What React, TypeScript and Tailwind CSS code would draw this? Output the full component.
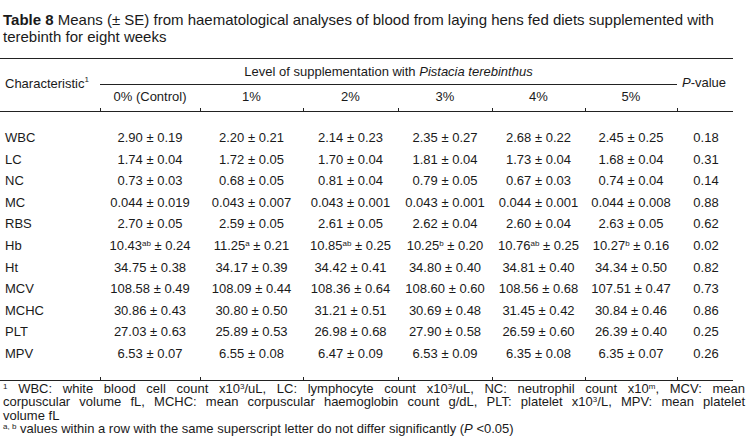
import * as React from "react"

const narrow = { fontFamily: '"Liberation Sans Narrow", "Liberation Sans", Arial, sans-serif' }

const cols = "grid grid-cols-[100px_100px_103px_95px_94px_93px_92px_56px]"

type Row = { name: string; vals: React.ReactNode[]; p: string }

const v = (a: string, b: string, sup?: string) => (
  <>
    {a}
    {sup ? <sup className="text-[8px] relative -top-[4px]">{sup}</sup> : null} ± {b}
  </>
)

const rows: Row[] = [
  { name: "WBC", vals: [v("2.90", "0.19"), v("2.20", "0.21"), v("2.14", "0.23"), v("2.35", "0.27"), v("2.68", "0.22"), v("2.45", "0.25")], p: "0.18" },
  { name: "LC", vals: [v("1.74", "0.04"), v("1.72", "0.05"), v("1.70", "0.04"), v("1.81", "0.04"), v("1.73", "0.04"), v("1.68", "0.04")], p: "0.31" },
  { name: "NC", vals: [v("0.73", "0.03"), v("0.68", "0.05"), v("0.81", "0.04"), v("0.79", "0.05"), v("0.67", "0.03"), v("0.74", "0.04")], p: "0.14" },
  { name: "MC", vals: [v("0.044", "0.019"), v("0.043", "0.007"), v("0.043", "0.001"), v("0.043", "0.001"), v("0.044", "0.001"), v("0.044", "0.008")], p: "0.88" },
  { name: "RBS", vals: [v("2.70", "0.05"), v("2.59", "0.05"), v("2.61", "0.05"), v("2.62", "0.04"), v("2.60", "0.04"), v("2.63", "0.05")], p: "0.62" },
  { name: "Hb", vals: [v("10.43", "0.24", "ab"), v("11.25", "0.21", "a"), v("10.85", "0.25", "ab"), v("10.25", "0.20", "b"), v("10.76", "0.25", "ab"), v("10.27", "0.16", "b")], p: "0.02" },
  { name: "Ht", vals: [v("34.75", "0.38"), v("34.17", "0.39"), v("34.42", "0.41"), v("34.80", "0.40"), v("34.81", "0.40"), v("34.34", "0.50")], p: "0.82" },
  { name: "MCV", vals: [v("108.58", "0.49"), v("108.09", "0.44"), v("108.36", "0.64"), v("108.60", "0.60"), v("108.56", "0.68"), v("107.51", "0.47")], p: "0.73" },
  { name: "MCHC", vals: [v("30.86", "0.43"), v("30.80", "0.50"), v("31.21", "0.51"), v("30.69", "0.48"), v("31.45", "0.42"), v("30.84", "0.46")], p: "0.86" },
  { name: "PLT", vals: [v("27.03", "0.63"), v("25.89", "0.53"), v("26.98", "0.68"), v("27.90", "0.58"), v("26.59", "0.60"), v("26.39", "0.40")], p: "0.25" },
  { name: "MPV", vals: [v("6.53", "0.07"), v("6.55", "0.08"), v("6.47", "0.09"), v("6.53", "0.09"), v("6.35", "0.08"), v("6.35", "0.07")], p: "0.26" },
]

function Ticks() {
  return (
    <div className={`${cols} h-[3px]`}>
      <div />
      <div className="border-l border-[#222]" />
      <div className="border-l border-[#222]" />
      <div className="border-l border-[#222]" />
      <div className="border-l border-[#222]" />
      <div className="border-l border-[#222]" />
      <div className="border-l border-[#222]" />
      <div className="border-l border-[#222]" />
    </div>
  )
}

const fsup = "text-[8px] relative -top-[4px]"

export default function App() {
  return (
    <div className="w-[753px] h-[446px] bg-white text-[#1a1a1a] overflow-hidden">
      {/* caption */}
      <div className="pt-[11px] pl-[3px] pr-[6px] text-[15px] leading-[17px]" style={narrow}>
        <span className="font-bold">Table 8</span> Means (± SE) from haematological analyses of blood from laying hens fed diets supplemented with terebinth for eight weeks
      </div>

      <div className="mt-[13px] w-[733px] text-[13px]" style={{ fontFamily: '"Liberation Sans", Arial, sans-serif' }}>
        {/* header */}
        <div className="border-t border-[#222]" />
        <div className={`${cols}`}>
          <div className="row-span-2 flex items-center pl-[5px]">
            Characteristic<sup className="text-[8px] relative -top-[4px]">1</sup>
          </div>
          <div className="col-span-6 h-[26px] flex items-center justify-center border-b border-[#222] pt-[1px]">
            Level of supplementation with&nbsp;<i>Pistacia terebinthus</i>
          </div>
          <div className="row-span-2 flex items-center justify-center pr-[2px] pb-[1px]">
            <span><i>P</i>-value</span>
          </div>
          {["0% (Control)", "1%", "2%", "3%", "4%", "5%"].map((h) => (
            <div key={h} className="h-[23px] flex items-center justify-center">
              {h}
            </div>
          ))}
        </div>
        <Ticks />
        <div className="border-t border-[#222]" />

        {/* body */}
        <div className="pt-[15px] pb-[12px]">
          {rows.map((r) => (
            <div key={r.name} className={`${cols} h-[21.6px] items-center`}>
              <div className="pl-[5px]">{r.name}</div>
              {r.vals.map((val, i) => (
                <div key={i} className="text-center whitespace-nowrap">
                  {val}
                </div>
              ))}
              <div className="text-center pl-[2px]">{r.p}</div>
            </div>
          ))}
        </div>
        <Ticks />
        <div className="border-t border-[#222]" />
      </div>

      {/* footnotes */}
      <div className="pl-[3px] pr-[8px] pt-[1px] text-[13px] leading-[13.5px]" style={narrow}>
        <p className="text-justify [text-align-last:justify] whitespace-nowrap">
          <sup className={fsup}>1</sup> WBC: white blood cell count x10<sup className={fsup}>3</sup>/uL, LC: lymphocyte count x10<sup className={fsup}>3</sup>/uL, NC: neutrophil count x10<sup className={fsup}>m</sup>, MCV: mean
        </p>
        <p className="text-justify [text-align-last:justify] whitespace-nowrap">
          corpuscular volume fL, MCHC: mean corpuscular haemoglobin count g/dL, PLT: platelet x10<sup className={fsup}>3</sup>/L, MPV: mean platelet
        </p>
        <p>volume fL</p>
        <p>
          <sup className={fsup}>a, b</sup> values within a row with the same superscript letter do not differ significantly (<i>P</i> &lt;0.05)
        </p>
      </div>
    </div>
  )
}
